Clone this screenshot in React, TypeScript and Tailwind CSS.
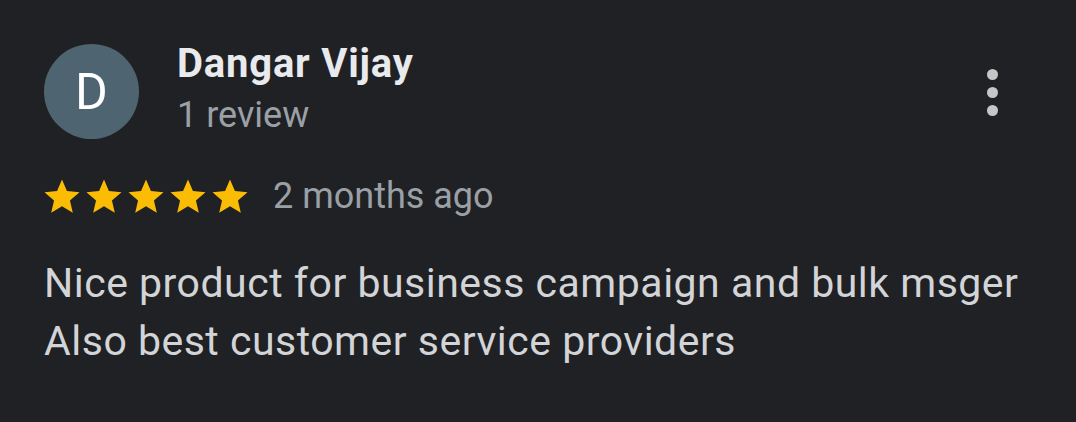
const StarIcon = () => (
  <svg width="42" height="42" viewBox="0 0 24 24" className="shrink-0">
    <path
      d="M12 17.27L18.18 21l-1.64-7.03L22 9.24l-7.19-.61L12 2 9.19 8.63 2 9.24l5.46 4.73L5.82 21z"
      fill="#fbbc04"
    />
  </svg>
);

const ReviewCard = () => {
  return (
    <div className="w-[1076px] h-[422px] bg-[#202124] font-['Roboto',sans-serif] px-[44px] pt-[44px]">
      <div className="flex items-start">
        <div className="w-[95px] h-[95px] rounded-full bg-[#4e6470] flex items-center justify-center text-white text-[50px] leading-none">
          D
        </div>
        <div className="ml-[38px] flex-1 -mt-[4px]">
          <div className="text-[40px] font-bold tracking-[0.8px] text-[#e8eaed] leading-[48px]">Dangar Vijay</div>
          <div className="text-[36px] text-[#9aa0a6] leading-[44px] mt-[5px]">1 review</div>
        </div>
        <div className="flex flex-col items-center gap-[7px] mt-[25px] mr-[34px]">
          <span className="w-[11px] h-[11px] rounded-full bg-[#c4c7c5]" />
          <span className="w-[11px] h-[11px] rounded-full bg-[#c4c7c5]" />
          <span className="w-[11px] h-[11px] rounded-full bg-[#c4c7c5]" />
        </div>
      </div>

      <div className="flex items-start mt-[37px] -ml-[3px]">
        <div className="flex">
          {Array.from({ length: 5 }).map((_, i) => (
            <StarIcon key={i} />
          ))}
        </div>
        <span className="ml-[22px] -mt-[2px] text-[36px] text-[#9aa0a6] leading-[44px]">2 months ago</span>
      </div>

      <p className="mt-[36px] text-[41px] tracking-[0.5px] leading-[58px] text-[#d2d4d7]">
        Nice product for business campaign and bulk msger
        <br />
        Also best customer service providers
      </p>
    </div>
  );
};

export default function App() {
  return <ReviewCard />;
}
